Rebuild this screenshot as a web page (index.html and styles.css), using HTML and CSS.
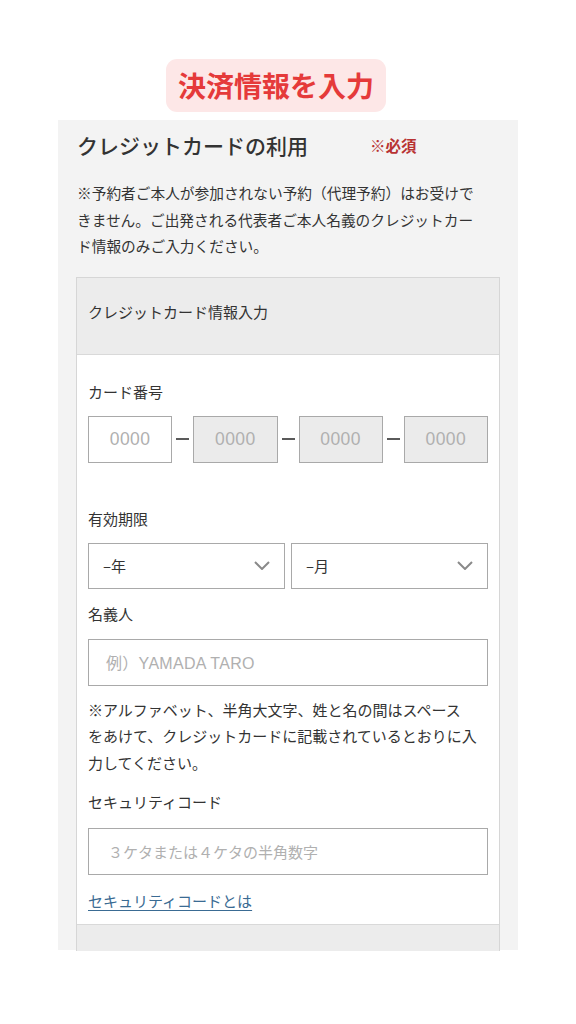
FILE: index.html
```html
<!DOCTYPE html>
<html lang="ja">
<head>
<meta charset="utf-8">
<title>決済情報を入力</title>
<link rel="stylesheet" href="styles.css">
</head>
<body>
<div class="title-wrap">
  <h1 class="title">決済情報を入力</h1>
</div>
<section class="panel">
  <div class="panel-head">
    <h2 class="panel-title">クレジットカードの利用</h2>
    <span class="required">※必須</span>
  </div>
  <p class="panel-note">※予約者ご本人が参加されない予約（代理予約）はお受けで<br>きません。ご出発される代表者ご本人名義のクレジットカー<br>ド情報のみご入力ください。</p>
  <div class="card-box">
    <div class="card-box-head">クレジットカード情報入力</div>
    <div class="card-box-body">
      <div class="label">カード番号</div>
      <div class="card-row">
        <div class="field num">0000</div>
        <span class="dash"></span>
        <div class="field num disabled">0000</div>
        <span class="dash"></span>
        <div class="field num disabled">0000</div>
        <span class="dash"></span>
        <div class="field num disabled">0000</div>
      </div>
      <div class="label label-exp">有効期限</div>
      <div class="select-row">
        <div class="select"><span>–年</span>
          <svg class="chev" viewBox="0 0 16 9" width="16" height="9"><path d="M1 1 L8 8 L15 1" fill="none" stroke="#8a8a8a" stroke-width="2"/></svg>
        </div>
        <div class="select"><span>–月</span>
          <svg class="chev" viewBox="0 0 16 9" width="16" height="9"><path d="M1 1 L8 8 L15 1" fill="none" stroke="#8a8a8a" stroke-width="2"/></svg>
        </div>
      </div>
      <div class="label label-name">名義人</div>
      <div class="field text">例）YAMADA TARO</div>
      <p class="note">※アルファベット、半角大文字、姓と名の間はスペース<br>をあけて、クレジットカードに記載されているとおりに入<br>力してください。</p>
      <div class="label label-sec">セキュリティコード</div>
      <div class="field text sec">３ケタまたは４ケタの半角数字</div>
      <a class="link" href="#">セキュリティコードとは</a>
    </div>
    <div class="card-box-foot"></div>
  </div>
</section>
</body>
</html>
```
FILE: styles.css
```css
* { box-sizing: border-box; }
html, body { margin: 0; padding: 0; background: #ffffff; }
body {
  font-family: "Noto Sans CJK JP", "Noto Sans", sans-serif;
  color: #333333;
  width: 576px;
  height: 1024px;
  overflow: hidden;
}
.title-wrap {
  display: flex;
  justify-content: center;
  padding-top: 59px;
  padding-right: 24px;
}
.title {
  margin: 0;
  background: #fde7e7;
  color: #e53a3a;
  font-size: 28px;
  font-weight: 700;
  line-height: 53px;
  height: 53px;
  padding: 0 12px;
  border-radius: 11px;
  letter-spacing: 0;
}
.panel {
  margin: 8px 0 0 58px;
  width: 460px;
  height: 830px;
  background: #f3f3f3;
  padding: 11px 18px 0 19px;
}
.panel-head {
  display: flex;
  align-items: center;
  height: 28px;
}
.panel-title {
  margin: 0;
  font-size: 21px;
  font-weight: 500;
  line-height: 28px;
  color: #333;
}
.required {
  margin-left: 62px;
  color: #b83232;
  font-size: 15.5px;
  font-weight: 700;
  line-height: 28px;
}
.panel-note {
  margin: 21px 0 0 0;
  font-size: 14.7px;
  line-height: 26.5px;
  color: #333;
}
.card-box {
  margin: 17px 0 0 -1px;
  width: 424px;
  border: 1px solid #d6d6d6;
  border-bottom: none;
  background: #ffffff;
}
.card-box-head {
  background: #ececec;
  border-bottom: 1px solid #d9d9d9;
  height: 77px;
  padding: 23px 11px 0;
  font-size: 15px;
  line-height: 22px;
  color: #333;
}
.card-box-body {
  padding: 26px 11px 12px;
}
.label {
  font-size: 15px;
  line-height: 22px;
  color: #333;
}
.card-row {
  display: flex;
  align-items: center;
  margin-top: 13px;
}
.field {
  border: 1.5px solid #a9a9a9;
  background: #ffffff;
  color: #b0b0b0;
  height: 47px;
  display: flex;
  align-items: center;
}
.num {
  flex: 1;
  justify-content: center;
  font-family: "Liberation Sans", "Noto Sans", sans-serif;
  font-size: 17.5px;
  letter-spacing: 0.4px;
}
.num.disabled { background: #ebebeb; }
.dash {
  width: 21px;
  display: flex;
  justify-content: center;
}
.dash::before {
  content: "";
  display: block;
  width: 13px;
  height: 2px;
  background: #5a5a5a;
}
.label-exp { margin-top: 45px; }
.select-row {
  display: grid;
  grid-template-columns: 1fr 1fr;
  gap: 6px;
  margin-top: 13px;
}
.select {
  border: 1.5px solid #a9a9a9;
  height: 46px;
  display: flex;
  align-items: center;
  justify-content: space-between;
  padding: 0 14px 0 14px;
  font-size: 15px;
  color: #333;
}
.chev { display: block; }
.label-name { margin-top: 14px; }
.text {
  margin-top: 14px;
  padding-left: 17px;
  font-size: 16px;
  font-family: "Liberation Sans", "Noto Sans CJK JP", sans-serif;
  letter-spacing: 0.3px;
}
.note {
  margin: 11px 0 0 0;
  font-size: 15px;
  line-height: 26.5px;
  color: #333;
}
.label-sec { margin-top: 15px; }
.sec {
  margin-top: 15px;
  padding-left: 19px;
  font-size: 15px;
  letter-spacing: 0;
  font-family: "Noto Sans CJK JP", sans-serif;
}
.link {
  display: inline-block;
  margin-top: 15px;
  font-size: 15px;
  line-height: 22px;
  color: #3a6b93;
  text-decoration: underline;
  text-underline-offset: 3px;
}
.card-box-foot {
  height: 27px;
  background: #ececec;
  border-top: 1px solid #d9d9d9;
}
```
